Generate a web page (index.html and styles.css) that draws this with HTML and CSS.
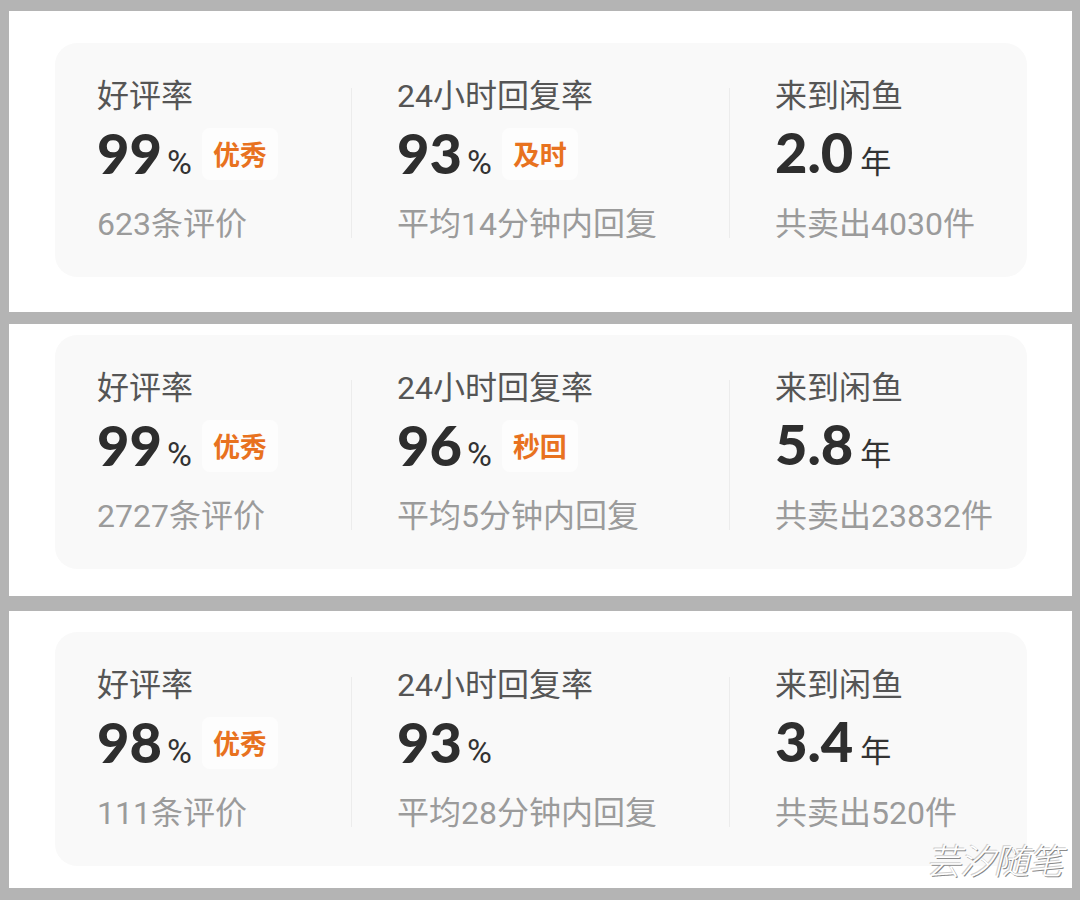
FILE: index.html
```html
<!DOCTYPE html>
<html lang="zh-CN">
<head>
<meta charset="utf-8">
<title>闲鱼卖家数据</title>
<link rel="stylesheet" href="styles.css">
</head>
<body>
<div class="stack">
  <section class="panel panel-1">
    <div class="card">
      <div class="stat">
        <div class="label">好评率</div>
        <div class="value-row"><span class="num">99<span class="unit pct">%</span></span><span class="badge">优秀</span></div>
        <div class="sub">623条评价</div>
      </div>
      <div class="divider"></div>
      <div class="stat">
        <div class="label">24小时回复率</div>
        <div class="value-row"><span class="num">93<span class="unit pct">%</span></span><span class="badge">及时</span></div>
        <div class="sub">平均14分钟内回复</div>
      </div>
      <div class="divider"></div>
      <div class="stat">
        <div class="label">来到闲鱼</div>
        <div class="value-row"><span class="num">2.0<span class="unit cjk">年</span></span></div>
        <div class="sub">共卖出4030件</div>
      </div>
    </div>
  </section>

  <section class="panel panel-2">
    <div class="card">
      <div class="stat">
        <div class="label">好评率</div>
        <div class="value-row"><span class="num">99<span class="unit pct">%</span></span><span class="badge">优秀</span></div>
        <div class="sub">2727条评价</div>
      </div>
      <div class="divider"></div>
      <div class="stat">
        <div class="label">24小时回复率</div>
        <div class="value-row"><span class="num">96<span class="unit pct">%</span></span><span class="badge">秒回</span></div>
        <div class="sub">平均5分钟内回复</div>
      </div>
      <div class="divider"></div>
      <div class="stat">
        <div class="label">来到闲鱼</div>
        <div class="value-row"><span class="num">5.8<span class="unit cjk">年</span></span></div>
        <div class="sub">共卖出23832件</div>
      </div>
    </div>
  </section>

  <section class="panel panel-3">
    <div class="card">
      <div class="stat">
        <div class="label">好评率</div>
        <div class="value-row"><span class="num">98<span class="unit pct">%</span></span><span class="badge">优秀</span></div>
        <div class="sub">111条评价</div>
      </div>
      <div class="divider"></div>
      <div class="stat">
        <div class="label">24小时回复率</div>
        <div class="value-row"><span class="num">93<span class="unit pct">%</span></span></div>
        <div class="sub">平均28分钟内回复</div>
      </div>
      <div class="divider"></div>
      <div class="stat">
        <div class="label">来到闲鱼</div>
        <div class="value-row"><span class="num">3.4<span class="unit cjk">年</span></span></div>
        <div class="sub">共卖出520件</div>
      </div>
    </div>
    <div class="watermark">芸汐随笔</div>
  </section>
</div>
</body>
</html>
```

FILE: styles.css
```css
html, body {
  margin: 0;
  padding: 0;
}

body {
  background: #b4b4b4;
  width: 1080px;
  height: 900px;
  overflow: hidden;
  font-family: Roboto, "Noto Sans CJK SC", sans-serif;
}

.stack {
  display: flex;
  flex-direction: column;
  padding: 11px 0 0 9px;
}

.panel {
  position: relative;
  width: 1063px;
  background: #ffffff;
  box-sizing: border-box;
  padding-left: 46px;
  padding-right: 45px;
}

.panel-1 {
  height: 301px;
  padding-top: 32px;
}

.panel-2 {
  height: 272px;
  padding-top: 11px;
  margin-top: 12px;
}

.panel-3 {
  height: 277px;
  padding-top: 21px;
  margin-top: 15px;
}

.card {
  height: 234px;
  box-sizing: border-box;
  background: #f9f9f9;
  border-radius: 22px;
  padding: 33px 0 33px 42px;
  display: grid;
  grid-template-columns: 254px 1px 377px 1px 1fr;
  align-items: start;
}

.stat {
  display: flex;
  flex-direction: column;
}

.divider + .stat {
  padding-left: 45px;
}

.divider {
  width: 1px;
  height: 150px;
  margin-top: 12px;
  background: #ececec;
}

.label {
  font-size: 32px;
  line-height: 40px;
  color: #555555;
  white-space: nowrap;
}

.value-row {
  height: 76px;
  display: flex;
  align-items: center;
}

.num {
  font-family: Lato, "Noto Sans", sans-serif;
  font-weight: 900;
  font-size: 56px;
  line-height: 56px;
  color: #2e2e2e;
  margin-top: 6px;
  white-space: nowrap;
}

.unit {
  font-family: Roboto, "Noto Sans CJK SC", sans-serif;
  font-weight: 400;
  font-size: 34px;
  color: #333333;
  margin-left: 5px;
}

.unit.cjk {
  font-size: 31px;
  margin-left: 7px;
}

.badge {
  margin-left: 10px;
  height: 52px;
  line-height: 52px;
  padding: 0 11px;
  box-sizing: border-box;
  border-radius: 8px;
  background: #fdfdfd;
  color: #e8721f;
  font-family: "Noto Sans CJK SC", sans-serif;
  font-weight: 700;
  font-size: 27px;
  white-space: nowrap;
}

.sub {
  margin-top: 12px;
  font-size: 32px;
  line-height: 40px;
  color: #9b9b9b;
  white-space: nowrap;
}

.watermark {
  position: absolute;
  right: 10px;
  bottom: 9px;
  font-family: "Noto Sans CJK SC", sans-serif;
  font-weight: 300;
  font-style: italic;
  font-size: 35px;
  line-height: 40px;
  letter-spacing: -1px;
  color: #ffffff;
  text-shadow: 1px 1px 0 #8a8a8a, -1px -1px 0 #d0d0d0;
}
```
